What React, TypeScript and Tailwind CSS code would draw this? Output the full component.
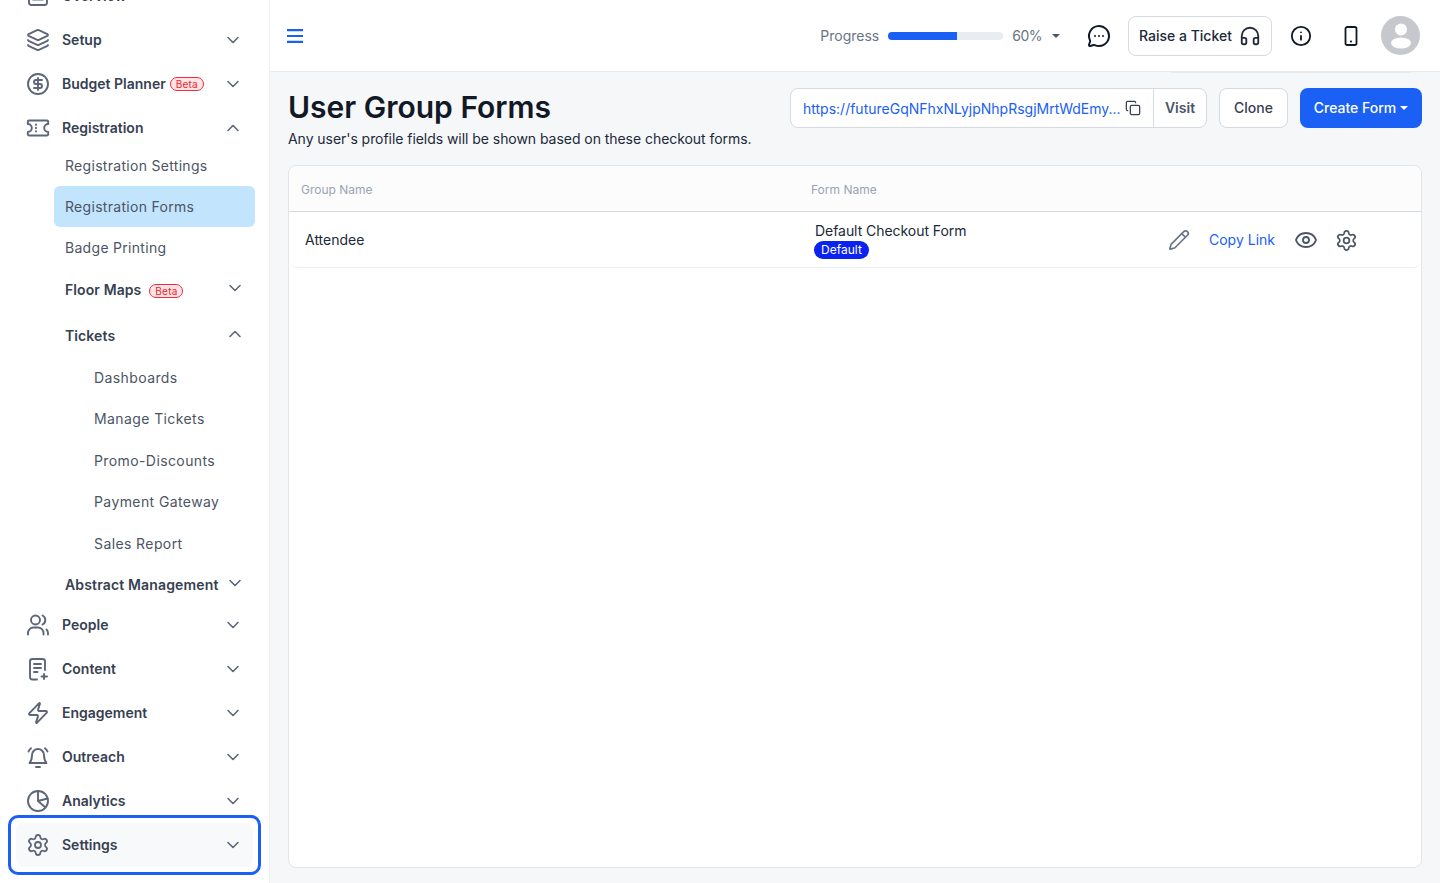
import { ChevronDown, ChevronUp, CircleDollarSign, Copy, Eye, Headphones, Info, Layers, MessageCircleMore, Pencil, Settings, Zap } from "lucide-react";
import type { ReactNode } from "react";

const Glyph = ({ children }: { children: ReactNode }) => (
  <svg width="24" height="24" viewBox="0 0 24 24" fill="none" stroke="currentColor" strokeWidth="1.9" strokeLinecap="round" strokeLinejoin="round">
    {children}
  </svg>
);

const OverviewIcon = () => (
  <Glyph>
    <rect x="3" y="3" width="18" height="18" rx="2.5" />
    <path d="M7 15.500h10" />
  </Glyph>
);

const TicketIcon = () => (
  <Glyph>
    <path d="M3 4.500h18a1.200 1.200 0 0 1 1.200 1.200V8a4 4 0 0 0 0 8v2.300a1.200 1.200 0 0 1-1.200 1.200H3a1.200 1.200 0 0 1-1.200-1.200V16a4 4 0 0 0 0-8V5.700A1.200 1.200 0 0 1 3 4.500Z" />
    <path d="M10 8.500v.4M10 11.800v.4M10 15.100v.4" />
  </Glyph>
);

const PeopleIcon = () => (
  <Glyph>
    <circle cx="9.500" cy="7" r="4.500" />
    <path d="M2 21.500v-1.500a5.500 5.500 0 0 1 5.500-5.500h4.500a5.500 5.500 0 0 1 5.500 5.500v1.500" />
    <path d="M16.500 2.500a5 5 0 0 1 0 9M22 21.500v-1.500a5 5 0 0 0-1.500-3.500" />
  </Glyph>
);

const FormPlusIcon = () => (
  <Glyph>
    <path d="M11 22.500H6.500A2.500 2.500 0 0 1 4 20V4.500A2.500 2.500 0 0 1 6.500 2h10A2.500 2.500 0 0 1 19 4.500V13" />
    <path d="M8 7h7M8 11h7M8 15h3.500M18 17v5M15.500 19.500h5.500" />
  </Glyph>
);

const BellIcon = () => (
  <Glyph>
    <path d="M6 10a6 6 0 0 1 12 0c0 4.500 1.200 6.500 2.500 8h-17C4.800 16.500 6 14.500 6 10Z" />
    <path d="M10 22h4M2.500 6.500C3 5 3.800 4 5 3.200M21.500 6.500C21 5 20.200 4 19 3.200" />
  </Glyph>
);

const PieIcon = () => (
  <Glyph>
    <circle cx="12" cy="12" r="10" />
    <path d="M12 2v10l7.500 6.500M12 12l9.500-2.500" />
  </Glyph>
);

const PhoneIcon = () => (
  <svg width="14" height="20" viewBox="0 0 14 20" fill="none" stroke="currentColor" strokeWidth="1.8" strokeLinecap="round">
    <rect x="1.500" y="1" width="11" height="18" rx="1.800" />
    <path d="M7 15.500h.01" strokeWidth="2.200" />
  </svg>
);

const HamburgerIcon = () => (
  <svg width="16" height="14" viewBox="0 0 16 14" fill="none" stroke="currentColor" strokeWidth="2.200">
    <path d="M0 1.200h16M0 7h16M0 12.800h16" />
  </svg>
);

const Beta = () => (
  <span className="inline-flex h-[14px] w-[34px] items-center justify-center rounded-full border border-[#ef2b3c] bg-[#ffe4e6] text-[10px] font-normal leading-none tracking-[0.2px] text-[#ef1c30]">
    Beta
  </span>
);

const NavRow = ({ icon, label, badge, open, boxed }: { icon: ReactNode; label: string; badge?: boolean; open?: boolean; boxed?: boolean }) => (
  <div className={`flex h-11 items-center rounded-lg pl-[10px] pr-[10px] ${boxed ? "bg-[#f8f9fb]" : ""}`}>
    <span className="flex w-[24px] shrink-0 justify-center text-[#5c6677]">{icon}</span>
    <span className="ml-[12px] text-sm font-semibold text-[#364152]">{label}</span>
    {badge && <span className="-mt-[1px] ml-1 flex"><Beta /></span>}
    <span className="ml-auto text-[#5c6677]">
      {open ? <ChevronUp size={20} strokeWidth={1.9} /> : <ChevronDown size={20} strokeWidth={1.9} />}
    </span>
  </div>
);

const SubRow = ({ label, active }: { label: string; active?: boolean }) => (
  <div className={`ml-[54px] mr-[14px] flex h-[41px] items-center rounded-md pl-[11px] text-sm tracking-[0.3px] text-[#4b5565] ${active ? "bg-[#c2e4fd]" : ""}`}>
    {label}
  </div>
);

const Sidebar = () => (
  <aside className="h-[883px] w-[270px] shrink-0 overflow-hidden border-r border-[#eef0f4] bg-white">
    <div className="-mt-[26px] px-[16px]">
      <NavRow icon={<OverviewIcon />} label="Overview" />
      <NavRow icon={<Layers size={24} strokeWidth={1.8} />} label="Setup" />
      <NavRow icon={<CircleDollarSign size={24} strokeWidth={1.9} />} label="Budget Planner" badge />
      <NavRow icon={<TicketIcon />} label="Registration" open />
    </div>
    <div className="-mt-[5px]">
      <SubRow label="Registration Settings" />
      <SubRow label="Registration Forms" active />
      <SubRow label="Badge Printing" />
      <div className="ml-[65px] mr-[24px] flex h-11 items-center text-sm font-semibold tracking-[0.1px] text-[#364152]">
        Floor Maps
        <span className="ml-2 mt-[1px] flex"><Beta /></span>
        <ChevronDown size={20} strokeWidth={1.9} className="-mt-1 ml-auto text-[#5c6677]" />
      </div>
      <div className="ml-[65px] mr-[24px] flex h-12 items-center text-sm font-semibold tracking-[0.1px] text-[#364152]">
        Tickets
        <ChevronUp size={20} strokeWidth={1.9} className="-mt-1 ml-auto text-[#5c6677]" />
      </div>
      <div className="-mt-[3px] ml-[94px] text-sm tracking-[0.4px] text-[#4b5565]">
        {["Dashboards", "Manage Tickets", "Promo-Discounts", "Payment Gateway", "Sales Report"].map((item) => (
          <div key={item} className="flex h-[41.5px] items-center">{item}</div>
        ))}
      </div>
      <div className="ml-[65px] mr-[24px] flex h-[41px] items-center text-sm font-semibold tracking-[0.15px] text-[#364152]">
        Abstract Management
        <ChevronDown size={20} strokeWidth={1.9} className="-mt-1 ml-auto text-[#5c6677]" />
      </div>
    </div>
    <div className="-mt-[2.500px] px-[16px]">
      <NavRow icon={<PeopleIcon />} label="People" />
      <NavRow icon={<FormPlusIcon />} label="Content" />
      <NavRow icon={<Zap size={24} strokeWidth={1.9} />} label="Engagement" />
      <NavRow icon={<BellIcon />} label="Outreach" />
      <NavRow icon={<PieIcon />} label="Analytics" />
    </div>
    <div className="-mt-[8px] mx-[8px] rounded-[10px] border-[3px] border-[#1a60f5] p-[5px]">
      <NavRow icon={<Settings size={24} strokeWidth={1.8} />} label="Settings" boxed />
    </div>
  </aside>
);

const TopBar = () => (
  <header className="relative flex h-[72px] items-center border-b border-[#e8eaee] bg-white pl-[17px] pr-[20px]">
    <span className="mt-[1px] flex text-[#1a60f5]"><HamburgerIcon /></span>
    <div className="ml-auto flex items-center">
      <span className="text-sm text-[#697586]">Progress</span>
      <div className="ml-[9px] h-[8px] w-[115px] rounded-full bg-[#e9ecf0]">
        <div className="h-full w-[69px] rounded-l-full bg-[#1a60f5]" />
      </div>
      <span className="ml-[9px] text-sm tracking-[-0.5px] text-[#697586]">60%</span>
      <span className="ml-[10px] h-0 w-0 border-x-[4.500px] border-t-[4.500px] border-x-transparent border-t-[#4b5565]" />
      <MessageCircleMore size={24} strokeWidth={2} className="ml-[27px] text-[#121926]" />
      <button className="ml-[17px] flex h-[40px] w-[144px] items-center rounded-lg border border-[#d5d9e0] bg-white pl-[10px] text-sm font-medium text-[#202939]">
        Raise a Ticket
        <Headphones size={22} strokeWidth={2} className="ml-[7px]" />
      </button>
      <Info size={22} strokeWidth={2} className="ml-[18px] text-[#121926]" />
      <span className="ml-[32px] flex text-[#121926]"><PhoneIcon /></span>
      <div className="ml-[23px] flex h-[39px] w-[39px] items-center justify-center overflow-hidden rounded-full bg-[#c6c8cd]">
        <svg width="24" height="26" viewBox="0 0 24 26" fill="white">
          <circle cx="12" cy="6.500" r="6" />
          <ellipse cx="12" cy="20" rx="10" ry="5.500" />
        </svg>
      </div>
    </div>
    <div className="absolute -bottom-[2px] right-[29px] h-px w-[240px] bg-[#e8eaee]" />
  </header>
);

const Content = () => (
  <main className="flex min-w-0 flex-1 flex-col bg-[#f6f7f9] pl-[18px] pr-[18px] pt-[16px]">
    <div className="flex items-start justify-between">
      <div>
        <h1 className="text-[30px] font-semibold leading-[38px] text-[#121926]">User Group Forms</h1>
        <p className="mt-[1px] text-sm leading-[24px] tracking-[-0.05px] text-[#202939]">Any user's profile fields will be shown based on these checkout forms.</p>
      </div>
      <div className="flex items-center">
        <div className="flex h-10 w-[417px] items-center rounded-lg border border-[#d5d9e0] bg-white">
          <span className="ml-[12px] w-[318px] truncate pt-[1px] text-sm text-[#1a60f5]">https://futureGqNFhxNLyjpNhpRsgjMrtWdEmy...</span>
          <Copy size={16} strokeWidth={1.9} className="ml-[4px] text-[#364152]" />
          <span className="ml-[12px] flex h-full flex-1 items-center justify-center border-l border-[#d5d9e0] text-sm font-semibold text-[#4b5565]">Visit</span>
        </div>
        <button className="ml-[12px] h-10 w-[69px] rounded-lg border border-[#d5d9e0] bg-white text-sm font-medium text-[#364152]">Clone</button>
        <button className="ml-[12px] flex h-10 w-[122px] items-center justify-center rounded-lg bg-[#1a60f5] text-sm font-medium text-white">
          Create Form
          <span className="ml-[4px] h-0 w-0 border-x-[4px] border-t-[4px] border-x-transparent border-t-white" />
        </button>
      </div>
    </div>
    <section className="mb-[15px] mt-[14px] flex-1 rounded-lg border border-[#e3e5e9] bg-white">
      <div className="flex h-[46px] items-center rounded-t-lg border-b border-[#d5d9e0] bg-[#fcfcfd] pt-[2px] text-xs text-[#9aa4b2]">
        <span className="ml-[12px] w-[510px]">Group Name</span>
        <span>Form Name</span>
      </div>
      <div className="flex h-[56px] items-center rounded-b-lg border-b border-[#eef0f3] text-sm text-[#202939]">
        <span className="ml-[16px] w-[510px]">Attendee</span>
        <div className="mt-[2px] w-[353px]">
          <div className="leading-[18px] tracking-[-0.05px]">Default Checkout Form</div>
          <span className="mt-[1px] -ml-[1px] flex h-[18px] w-[55px] items-center justify-center rounded-full bg-[#0a23f0] text-xs text-white">Default</span>
        </div>
        <Pencil size={22} strokeWidth={1.8} className="mt-[1px] text-[#697586]" />
        <span className="ml-[19px] text-sm text-[#1a60f5]">Copy Link</span>
        <Eye size={24} strokeWidth={1.8} className="mt-[1px] ml-[19px] text-[#4b5565]" />
        <Settings size={23} strokeWidth={1.8} className="mt-[1px] ml-[17px] text-[#4b5565]" />
      </div>
    </section>
  </main>
);

export default function App() {
  return (
    <div className="flex h-[883px] w-[1440px] overflow-hidden bg-white font-['Inter',sans-serif] antialiased">
      <Sidebar />
      <div className="flex min-w-0 flex-1 flex-col">
        <TopBar />
        <Content />
      </div>
    </div>
  );
}
